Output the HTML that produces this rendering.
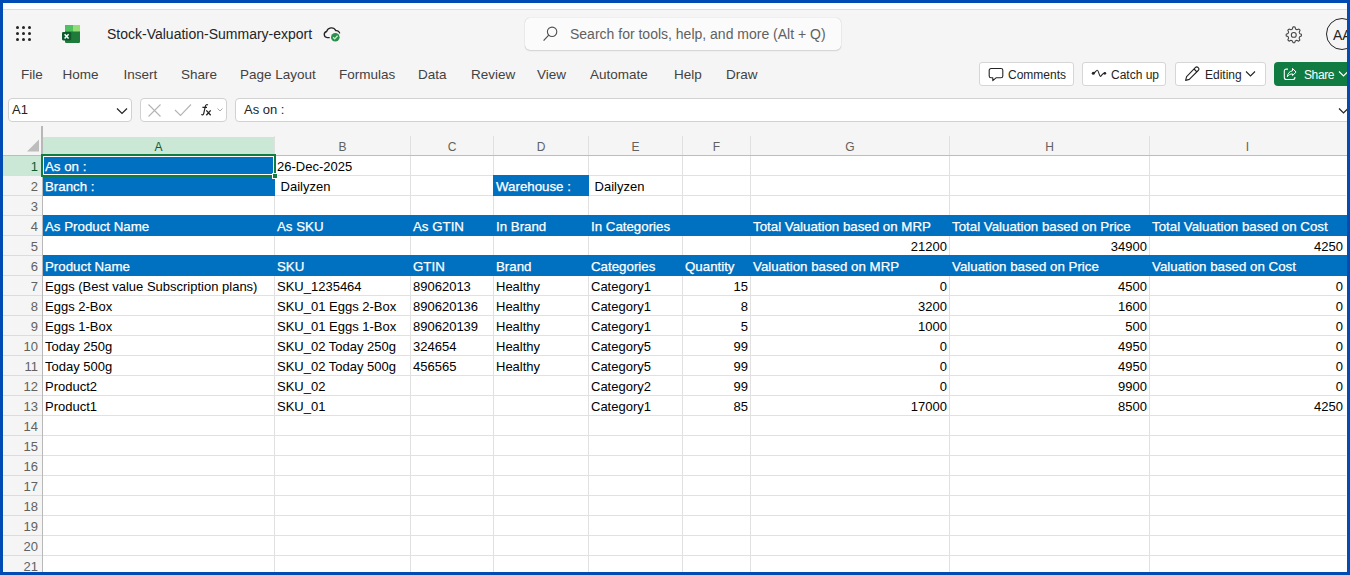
<!DOCTYPE html><html><head><meta charset="utf-8"><style>
*{margin:0;padding:0;box-sizing:border-box}
html,body{width:1350px;height:575px;overflow:hidden;background:#f5f5f5;font-family:"Liberation Sans",sans-serif;position:relative}
.a{position:absolute}
.t{position:absolute;white-space:nowrap;line-height:20px;font-size:13px;color:#000}
.w{color:#fff;-webkit-text-stroke:0.25px #fff;font-size:13.3px}
.r{text-align:right}
.tab{position:absolute;top:65px;font-size:13.5px;color:#424242;line-height:20px;white-space:nowrap}
.btn{position:absolute;top:62px;height:24px;border:1px solid #d6d6d6;border-radius:3px;background:#fff}
.bt{position:absolute;top:65px;font-size:12px;line-height:20px;color:#242424;white-space:nowrap}
.hl{position:absolute;height:1px;background:#e1e1e1}
.vl{position:absolute;width:1px;background:#e1e1e1}
.ch{position:absolute;top:138px;height:18px;line-height:18px;text-align:center;font-size:12px;color:#616161}
.rh{position:absolute;left:3px;width:35px;height:20px;line-height:20px;text-align:right;font-size:13px;color:#616161}
</style></head><body>
<div class="a" style="left:0;top:0;width:1350px;height:9px;background:#fff"></div>
<div class="a" style="left:0;top:9px;width:1350px;height:1px;background:#dedede"></div>
<div class="a" style="left:16.0px;top:26.0px;width:3px;height:3px;border-radius:50%;background:#242424"></div>
<div class="a" style="left:22.0px;top:26.0px;width:3px;height:3px;border-radius:50%;background:#242424"></div>
<div class="a" style="left:28.0px;top:26.0px;width:3px;height:3px;border-radius:50%;background:#242424"></div>
<div class="a" style="left:16.0px;top:32.0px;width:3px;height:3px;border-radius:50%;background:#242424"></div>
<div class="a" style="left:22.0px;top:32.0px;width:3px;height:3px;border-radius:50%;background:#242424"></div>
<div class="a" style="left:28.0px;top:32.0px;width:3px;height:3px;border-radius:50%;background:#242424"></div>
<div class="a" style="left:16.0px;top:38.0px;width:3px;height:3px;border-radius:50%;background:#242424"></div>
<div class="a" style="left:22.0px;top:38.0px;width:3px;height:3px;border-radius:50%;background:#242424"></div>
<div class="a" style="left:28.0px;top:38.0px;width:3px;height:3px;border-radius:50%;background:#242424"></div>
<svg class="a" style="left:61px;top:24px" width="21" height="21" viewBox="0 0 21 21">
<rect x="4" y="1" width="15" height="18" rx="1.2" fill="#1e7b3a"/>
<rect x="4" y="1" width="15" height="6.3" rx="1.2" fill="#4fc05e"/>
<rect x="4" y="5" width="15" height="2.3" fill="#4fc05e"/>
<rect x="12" y="1" width="7" height="6.3" fill="#93dd78"/>
<rect x="1" y="8" width="9.2" height="8.4" rx="1.3" fill="#0b5a2a"/>
<path d="M3.6 10.2 L7.6 14.6 M7.6 10.2 L3.6 14.6" stroke="#fff" stroke-width="1.5"/>
</svg>
<div class="a" style="left:107px;top:24px;font-size:14px;line-height:20px;color:#242424;white-space:nowrap">Stock-Valuation-Summary-export</div>
<svg class="a" style="left:318px;top:22px" width="28" height="24" viewBox="0 0 28 24">
<path d="M11.7 15.6 H9.2 A3.1 3.1 0 0 1 8.6 9.5 A5 5 0 0 1 17.8 8.6 A3.3 3.3 0 0 1 21.7 11.4" fill="none" stroke="#242424" stroke-width="1.3"/>
<circle cx="17.3" cy="15.2" r="4.6" fill="#f5f5f5"/>
<circle cx="17.3" cy="15.2" r="4.3" fill="#2b8f49"/>
<path d="M15.1 15.3 L16.7 16.9 L19.6 13.8" fill="none" stroke="#bff5c8" stroke-width="1.3"/>
</svg>
<div class="a" style="left:525px;top:18px;width:316px;height:32px;border-radius:5px;background:#fbfbfb;box-shadow:0 0 1px rgba(0,0,0,.25),0 1px 1.5px rgba(0,0,0,.12)"></div>
<svg class="a" style="left:542px;top:26px" width="17" height="17" viewBox="0 0 17 17">
<circle cx="10.1" cy="5.8" r="4.7" fill="none" stroke="#505050" stroke-width="1.1"/>
<path d="M6.7 9.2 L1.6 14.6" stroke="#505050" stroke-width="1.2"/>
</svg>
<div class="a" style="left:570px;top:24px;font-size:14px;line-height:20px;color:#616161;white-space:nowrap">Search for tools, help, and more (Alt + Q)</div>
<svg class="a" style="left:1284px;top:25px" width="19" height="19" viewBox="0 0 20 20">
<path d="M10 1.8 L11.6 2 L12.1 4.2 L13.6 5 L15.7 4.2 L16.9 5.5 L16 7.6 L16.6 9.1 L18.3 9.8 L18.3 11.6 L16.5 12.3 L15.9 13.8 L16.7 15.8 L15.4 17 L13.4 16.1 L11.9 16.8 L11.3 18.6 L9.5 18.6 L8.8 16.8 L7.3 16.1 L5.3 17 L4 15.7 L4.9 13.7 L4.2 12.2 L2.3 11.5 L2.3 9.7 L4.2 9 L4.9 7.5 L4 5.5 L5.3 4.3 L7.3 5.1 L8.8 4.3 L9.4 2 Z" fill="none" stroke="#424242" stroke-width="1.1" stroke-linejoin="round"/>
<circle cx="10.3" cy="10.4" r="2.6" fill="none" stroke="#424242" stroke-width="1.1"/>
</svg>
<div class="a" style="left:1326px;top:18px;width:32px;height:32px;border-radius:50%;border:1.2px solid #242424;background:#f5f5f5"></div>
<div class="a" style="left:1333px;top:25px;font-size:14px;line-height:20px;color:#242424">AA</div>
<div class="tab" style="left:21px">File</div>
<div class="tab" style="left:62.5px">Home</div>
<div class="tab" style="left:123.5px">Insert</div>
<div class="tab" style="left:181px">Share</div>
<div class="tab" style="left:240px">Page Layout</div>
<div class="tab" style="left:339px">Formulas</div>
<div class="tab" style="left:418px">Data</div>
<div class="tab" style="left:471px">Review</div>
<div class="tab" style="left:537px">View</div>
<div class="tab" style="left:590px">Automate</div>
<div class="tab" style="left:674px">Help</div>
<div class="tab" style="left:726px">Draw</div>
<div class="btn" style="left:979px;width:95px"></div>
<div class="btn" style="left:1082px;width:84px"></div>
<div class="btn" style="left:1175px;width:91px"></div>
<div class="a" style="left:1274px;top:62px;width:90px;height:24px;border-radius:4px;background:#107c41"></div>
<div class="bt" style="left:1008px">Comments</div>
<div class="bt" style="left:1111px">Catch up</div>
<div class="bt" style="left:1205px">Editing</div>
<div class="bt" style="left:1304px;color:#fff;letter-spacing:-0.4px">Share</div>
<svg class="a" style="left:988px;top:67px" width="16" height="15" viewBox="0 0 16 15">
<path d="M3 1.5 H13 A1.8 1.8 0 0 1 14.8 3.3 V9 A1.8 1.8 0 0 1 13 10.8 H8 L4.8 13.6 V10.8 H3 A1.8 1.8 0 0 1 1.2 9 V3.3 A1.8 1.8 0 0 1 3 1.5 Z" fill="none" stroke="#242424" stroke-width="1.1" stroke-linejoin="round"/>
</svg>
<svg class="a" style="left:1091px;top:68px" width="16" height="12" viewBox="0 0 16 12">
<path d="M2.3 5.3 C4 5.3 5 2.2 6.3 2.3 C7.8 2.4 8.2 8.4 9.4 8.4 C10.5 8.4 10.8 5.3 13.8 5.3" fill="none" stroke="#242424" stroke-width="1.1"/>
<circle cx="2.3" cy="5.3" r="1.5" fill="#242424"/><circle cx="13.8" cy="5.3" r="1.4" fill="#242424"/>
</svg>
<svg class="a" style="left:1184px;top:66px" width="16" height="16" viewBox="0 0 16 16">
<path d="M11.3 1.6 A1.9 1.9 0 0 1 14.2 4.5 L5.3 13.4 L1.6 14.4 L2.6 10.7 Z" fill="none" stroke="#242424" stroke-width="1.1" stroke-linejoin="round"/>
<path d="M10 3 L13 6" stroke="#242424" stroke-width="1.1"/>
</svg>
<svg class="a" style="left:1245px;top:70px" width="11" height="8" viewBox="0 0 11 8"><path d="M1 1.5 L5.5 6 L10 1.5" fill="none" stroke="#242424" stroke-width="1.1"/></svg>
<svg class="a" style="left:1283px;top:67px" width="15" height="15" viewBox="0 0 15 15">
<path d="M5 2.1 H3.3 A2 2 0 0 0 1.3 4.1 V10.5 A2 2 0 0 0 3.3 12.5 H9.9 A2 2 0 0 0 11.9 10.5 V10" fill="none" stroke="#fff" stroke-width="1.1"/>
<path d="M9.5 1.4 L13.1 5.1 L9.5 8.6 V6.9 C7.2 6.9 5.6 7.9 4.3 9.8 C4.6 6.6 6.3 4.3 9.5 3.8 Z" fill="none" stroke="#fff" stroke-width="1" stroke-linejoin="round"/>
</svg>
<svg class="a" style="left:1338px;top:70px" width="11" height="8" viewBox="0 0 11 8"><path d="M1 1.5 L5.5 6 L10 1.5" fill="none" stroke="#fff" stroke-width="1.1"/></svg>
<div class="a" style="left:8px;top:98px;width:124px;height:24px;border:1px solid #d1d1d1;border-radius:4px;background:#fff"></div>
<div class="a" style="left:12px;top:100px;font-size:13px;line-height:20px;color:#242424">A1</div>
<svg class="a" style="left:116px;top:107px" width="12" height="8" viewBox="0 0 12 8"><path d="M1 1.5 L6 6.5 L11 1.5" fill="none" stroke="#242424" stroke-width="1.2"/></svg>
<div class="a" style="left:140px;top:98px;width:87px;height:24px;border:1px solid #d1d1d1;border-radius:4px;background:#fff"></div>
<svg class="a" style="left:147px;top:103px" width="15" height="15" viewBox="0 0 15 15"><path d="M1.5 1.5 L13.5 13.5 M13.5 1.5 L1.5 13.5" stroke="#b4b4b4" stroke-width="1.1"/></svg>
<svg class="a" style="left:174px;top:103px" width="18" height="14" viewBox="0 0 18 14"><path d="M1 7 L6.5 12.5 L17 1.5" fill="none" stroke="#b4b4b4" stroke-width="1.1"/></svg>
<svg class="a" style="left:196px;top:98px" width="20" height="24" viewBox="0 0 20 24"><path d="M11.8 7.2 C11.2 6.4 9.7 6.5 9.3 8.3 L7.7 15.6 C7.4 17 6.3 17.2 5.3 16.4 M6.4 9.4 H11" fill="none" stroke="#242424" stroke-width="1.2"/><path d="M10.3 12.4 L14.7 17.2 M14.7 12.4 L10.3 17.2" stroke="#242424" stroke-width="1.3"/></svg>
<svg class="a" style="left:217px;top:108px" width="6" height="4" viewBox="0 0 6 4"><path d="M0.5 0.5 L3 3 L5.5 0.5" fill="none" stroke="#9e9e9e" stroke-width="0.9"/></svg>
<div class="a" style="left:235px;top:98px;width:1130px;height:24px;border:1px solid #d1d1d1;border-radius:4px;background:#fff"></div>
<div class="a" style="left:244px;top:100px;font-size:13px;line-height:20px;color:#242424">As on :</div>
<svg class="a" style="left:1338px;top:107px" width="11" height="8" viewBox="0 0 11 8"><path d="M1 1.5 L5.5 6 L10 1.5" fill="none" stroke="#242424" stroke-width="1.2"/></svg>
<div class="a" style="left:43px;top:156px;width:1310px;height:420px;background:#fff"></div>
<div class="a" style="left:3px;top:155px;width:1350px;height:1px;background:#bdbdbd"></div>
<div class="a" style="left:41px;top:126px;width:2px;height:30px;background:#b8b8b8"></div>
<div class="a" style="left:42px;top:156px;width:1px;height:420px;background:#b8b8b8"></div>
<svg class="a" style="left:26px;top:139px" width="14" height="13" viewBox="0 0 14 13"><path d="M1 12.5 H13 V0.5 Z" fill="#bdbdbd"/></svg>
<div class="a" style="left:43px;top:137px;width:231px;height:18px;background:#cae8d5"></div>
<div class="a" style="left:3px;top:156px;width:38px;height:19px;background:#cae8d5"></div>
<div class="vl" style="left:274px;top:136px;height:19px;background:#e0e0e0"></div>
<div class="vl" style="left:410px;top:136px;height:19px;background:#e0e0e0"></div>
<div class="vl" style="left:493px;top:136px;height:19px;background:#e0e0e0"></div>
<div class="vl" style="left:588px;top:136px;height:19px;background:#e0e0e0"></div>
<div class="vl" style="left:682px;top:136px;height:19px;background:#e0e0e0"></div>
<div class="vl" style="left:750px;top:136px;height:19px;background:#e0e0e0"></div>
<div class="vl" style="left:949px;top:136px;height:19px;background:#e0e0e0"></div>
<div class="vl" style="left:1149px;top:136px;height:19px;background:#e0e0e0"></div>
<div class="ch" style="left:43px;width:231px;color:#0e5c2f">A</div>
<div class="ch" style="left:275px;width:135px;color:#616161">B</div>
<div class="ch" style="left:411px;width:82px;color:#616161">C</div>
<div class="ch" style="left:494px;width:94px;color:#616161">D</div>
<div class="ch" style="left:589px;width:93px;color:#616161">E</div>
<div class="ch" style="left:683px;width:67px;color:#616161">F</div>
<div class="ch" style="left:751px;width:198px;color:#616161">G</div>
<div class="ch" style="left:950px;width:199px;color:#616161">H</div>
<div class="ch" style="left:1150px;width:195px;color:#616161">I</div>
<div class="a" style="left:3px;top:175px;width:39px;height:1px;background:#dcdcdc"></div>
<div class="rh" style="top:157px;color:#0e5c2f">1</div>
<div class="a" style="left:3px;top:195px;width:39px;height:1px;background:#dcdcdc"></div>
<div class="rh" style="top:177px;color:#616161">2</div>
<div class="a" style="left:3px;top:215px;width:39px;height:1px;background:#dcdcdc"></div>
<div class="rh" style="top:197px;color:#616161">3</div>
<div class="a" style="left:3px;top:235px;width:39px;height:1px;background:#dcdcdc"></div>
<div class="rh" style="top:217px;color:#616161">4</div>
<div class="a" style="left:3px;top:255px;width:39px;height:1px;background:#dcdcdc"></div>
<div class="rh" style="top:237px;color:#616161">5</div>
<div class="a" style="left:3px;top:275px;width:39px;height:1px;background:#dcdcdc"></div>
<div class="rh" style="top:257px;color:#616161">6</div>
<div class="a" style="left:3px;top:295px;width:39px;height:1px;background:#dcdcdc"></div>
<div class="rh" style="top:277px;color:#616161">7</div>
<div class="a" style="left:3px;top:315px;width:39px;height:1px;background:#dcdcdc"></div>
<div class="rh" style="top:297px;color:#616161">8</div>
<div class="a" style="left:3px;top:335px;width:39px;height:1px;background:#dcdcdc"></div>
<div class="rh" style="top:317px;color:#616161">9</div>
<div class="a" style="left:3px;top:355px;width:39px;height:1px;background:#dcdcdc"></div>
<div class="rh" style="top:337px;color:#616161">10</div>
<div class="a" style="left:3px;top:375px;width:39px;height:1px;background:#dcdcdc"></div>
<div class="rh" style="top:357px;color:#616161">11</div>
<div class="a" style="left:3px;top:395px;width:39px;height:1px;background:#dcdcdc"></div>
<div class="rh" style="top:377px;color:#616161">12</div>
<div class="a" style="left:3px;top:415px;width:39px;height:1px;background:#dcdcdc"></div>
<div class="rh" style="top:397px;color:#616161">13</div>
<div class="a" style="left:3px;top:435px;width:39px;height:1px;background:#dcdcdc"></div>
<div class="rh" style="top:417px;color:#616161">14</div>
<div class="a" style="left:3px;top:455px;width:39px;height:1px;background:#dcdcdc"></div>
<div class="rh" style="top:437px;color:#616161">15</div>
<div class="a" style="left:3px;top:475px;width:39px;height:1px;background:#dcdcdc"></div>
<div class="rh" style="top:457px;color:#616161">16</div>
<div class="a" style="left:3px;top:495px;width:39px;height:1px;background:#dcdcdc"></div>
<div class="rh" style="top:477px;color:#616161">17</div>
<div class="a" style="left:3px;top:515px;width:39px;height:1px;background:#dcdcdc"></div>
<div class="rh" style="top:497px;color:#616161">18</div>
<div class="a" style="left:3px;top:535px;width:39px;height:1px;background:#dcdcdc"></div>
<div class="rh" style="top:517px;color:#616161">19</div>
<div class="a" style="left:3px;top:555px;width:39px;height:1px;background:#dcdcdc"></div>
<div class="rh" style="top:537px;color:#616161">20</div>
<div class="a" style="left:3px;top:575px;width:39px;height:1px;background:#dcdcdc"></div>
<div class="rh" style="top:557px;color:#616161">21</div>
<div class="hl" style="left:43px;top:175px;width:1303px"></div>
<div class="hl" style="left:43px;top:195px;width:1303px"></div>
<div class="hl" style="left:43px;top:215px;width:1303px"></div>
<div class="hl" style="left:43px;top:235px;width:1303px"></div>
<div class="hl" style="left:43px;top:255px;width:1303px"></div>
<div class="hl" style="left:43px;top:275px;width:1303px"></div>
<div class="hl" style="left:43px;top:295px;width:1303px"></div>
<div class="hl" style="left:43px;top:315px;width:1303px"></div>
<div class="hl" style="left:43px;top:335px;width:1303px"></div>
<div class="hl" style="left:43px;top:355px;width:1303px"></div>
<div class="hl" style="left:43px;top:375px;width:1303px"></div>
<div class="hl" style="left:43px;top:395px;width:1303px"></div>
<div class="hl" style="left:43px;top:415px;width:1303px"></div>
<div class="hl" style="left:43px;top:435px;width:1303px"></div>
<div class="hl" style="left:43px;top:455px;width:1303px"></div>
<div class="hl" style="left:43px;top:475px;width:1303px"></div>
<div class="hl" style="left:43px;top:495px;width:1303px"></div>
<div class="hl" style="left:43px;top:515px;width:1303px"></div>
<div class="hl" style="left:43px;top:535px;width:1303px"></div>
<div class="hl" style="left:43px;top:555px;width:1303px"></div>
<div class="hl" style="left:43px;top:575px;width:1303px"></div>
<div class="vl" style="left:274px;top:156px;height:420px"></div>
<div class="vl" style="left:410px;top:156px;height:420px"></div>
<div class="vl" style="left:493px;top:156px;height:420px"></div>
<div class="vl" style="left:588px;top:156px;height:420px"></div>
<div class="vl" style="left:682px;top:156px;height:420px"></div>
<div class="vl" style="left:750px;top:156px;height:420px"></div>
<div class="vl" style="left:949px;top:156px;height:420px"></div>
<div class="vl" style="left:1149px;top:156px;height:420px"></div>
<div class="a" style="left:43px;top:155px;width:232px;height:41px;background:#0070c0"></div>
<div class="a" style="left:493px;top:175px;width:96px;height:21px;background:#0070c0"></div>
<div class="a" style="left:43px;top:215px;width:1304px;height:21px;background:#0070c0"></div>
<div class="a" style="left:43px;top:255px;width:1304px;height:21px;background:#0070c0"></div>
<div class="t w" style="left:45px;top:157px">As on :</div>
<div class="t" style="left:277px;top:157px">26-Dec-2025</div>
<div class="t w" style="left:45px;top:177px">Branch :</div>
<div class="t" style="left:277px;top:177px">&nbsp;Dailyzen</div>
<div class="t w" style="left:496px;top:177px">Warehouse :</div>
<div class="t" style="left:591px;top:177px">&nbsp;Dailyzen</div>
<div class="t w" style="left:45px;top:217px">As Product Name</div>
<div class="t w" style="left:277px;top:217px">As SKU</div>
<div class="t w" style="left:413px;top:217px">As GTIN</div>
<div class="t w" style="left:496px;top:217px">In Brand</div>
<div class="t w" style="left:591px;top:217px">In Categories</div>
<div class="t w" style="left:753px;top:217px">Total Valuation based on MRP</div>
<div class="t w" style="left:952px;top:217px">Total Valuation based on Price</div>
<div class="t w" style="left:1152px;top:217px">Total Valuation based on Cost</div>
<div class="t r" style="left:647px;width:300px;top:237px">21200</div>
<div class="t r" style="left:847px;width:300px;top:237px">34900</div>
<div class="t r" style="left:1043px;width:300px;top:237px">4250</div>
<div class="t w" style="left:45px;top:257px">Product Name</div>
<div class="t w" style="left:277px;top:257px">SKU</div>
<div class="t w" style="left:413px;top:257px">GTIN</div>
<div class="t w" style="left:496px;top:257px">Brand</div>
<div class="t w" style="left:591px;top:257px">Categories</div>
<div class="t w" style="left:685px;top:257px">Quantity</div>
<div class="t w" style="left:753px;top:257px">Valuation based on MRP</div>
<div class="t w" style="left:952px;top:257px">Valuation based on Price</div>
<div class="t w" style="left:1152px;top:257px">Valuation based on Cost</div>
<div class="t" style="left:45px;top:277px">Eggs (Best value Subscription plans)</div>
<div class="t" style="left:277px;top:277px">SKU_1235464</div>
<div class="t" style="left:413px;top:277px">89062013</div>
<div class="t" style="left:496px;top:277px">Healthy</div>
<div class="t" style="left:591px;top:277px">Category1</div>
<div class="t r" style="left:448px;width:300px;top:277px">15</div>
<div class="t r" style="left:647px;width:300px;top:277px">0</div>
<div class="t r" style="left:847px;width:300px;top:277px">4500</div>
<div class="t r" style="left:1043px;width:300px;top:277px">0</div>
<div class="t" style="left:45px;top:297px">Eggs 2-Box</div>
<div class="t" style="left:277px;top:297px">SKU_01 Eggs 2-Box</div>
<div class="t" style="left:413px;top:297px">890620136</div>
<div class="t" style="left:496px;top:297px">Healthy</div>
<div class="t" style="left:591px;top:297px">Category1</div>
<div class="t r" style="left:448px;width:300px;top:297px">8</div>
<div class="t r" style="left:647px;width:300px;top:297px">3200</div>
<div class="t r" style="left:847px;width:300px;top:297px">1600</div>
<div class="t r" style="left:1043px;width:300px;top:297px">0</div>
<div class="t" style="left:45px;top:317px">Eggs 1-Box</div>
<div class="t" style="left:277px;top:317px">SKU_01 Eggs 1-Box</div>
<div class="t" style="left:413px;top:317px">890620139</div>
<div class="t" style="left:496px;top:317px">Healthy</div>
<div class="t" style="left:591px;top:317px">Category1</div>
<div class="t r" style="left:448px;width:300px;top:317px">5</div>
<div class="t r" style="left:647px;width:300px;top:317px">1000</div>
<div class="t r" style="left:847px;width:300px;top:317px">500</div>
<div class="t r" style="left:1043px;width:300px;top:317px">0</div>
<div class="t" style="left:45px;top:337px">Today 250g</div>
<div class="t" style="left:277px;top:337px">SKU_02 Today 250g</div>
<div class="t" style="left:413px;top:337px">324654</div>
<div class="t" style="left:496px;top:337px">Healthy</div>
<div class="t" style="left:591px;top:337px">Category5</div>
<div class="t r" style="left:448px;width:300px;top:337px">99</div>
<div class="t r" style="left:647px;width:300px;top:337px">0</div>
<div class="t r" style="left:847px;width:300px;top:337px">4950</div>
<div class="t r" style="left:1043px;width:300px;top:337px">0</div>
<div class="t" style="left:45px;top:357px">Today 500g</div>
<div class="t" style="left:277px;top:357px">SKU_02 Today 500g</div>
<div class="t" style="left:413px;top:357px">456565</div>
<div class="t" style="left:496px;top:357px">Healthy</div>
<div class="t" style="left:591px;top:357px">Category5</div>
<div class="t r" style="left:448px;width:300px;top:357px">99</div>
<div class="t r" style="left:647px;width:300px;top:357px">0</div>
<div class="t r" style="left:847px;width:300px;top:357px">4950</div>
<div class="t r" style="left:1043px;width:300px;top:357px">0</div>
<div class="t" style="left:45px;top:377px">Product2</div>
<div class="t" style="left:277px;top:377px">SKU_02</div>
<div class="t" style="left:591px;top:377px">Category2</div>
<div class="t r" style="left:448px;width:300px;top:377px">99</div>
<div class="t r" style="left:647px;width:300px;top:377px">0</div>
<div class="t r" style="left:847px;width:300px;top:377px">9900</div>
<div class="t r" style="left:1043px;width:300px;top:377px">0</div>
<div class="t" style="left:45px;top:397px">Product1</div>
<div class="t" style="left:277px;top:397px">SKU_01</div>
<div class="t" style="left:591px;top:397px">Category1</div>
<div class="t r" style="left:448px;width:300px;top:397px">85</div>
<div class="t r" style="left:647px;width:300px;top:397px">17000</div>
<div class="t r" style="left:847px;width:300px;top:397px">8500</div>
<div class="t r" style="left:1043px;width:300px;top:397px">4250</div>
<div class="a" style="left:41px;top:154px;width:235px;height:23px;border:2px solid #107c41"></div>
<div class="a" style="left:43px;top:156px;width:231px;height:19px;border:1px solid #fff"></div>
<div class="a" style="left:272px;top:173px;width:6px;height:6px;background:#107c41;border:1px solid #fff"></div>
<div class="a" style="left:0;top:0;width:1350px;height:3px;background:#004bb4"></div>
<div class="a" style="left:0;top:0;width:3px;height:575px;background:#004bb4"></div>
<div class="a" style="left:1347px;top:0;width:3px;height:575px;background:#004bb4"></div>
<div class="a" style="left:0;top:572px;width:1350px;height:3px;background:#004bb4"></div>
</body></html>
